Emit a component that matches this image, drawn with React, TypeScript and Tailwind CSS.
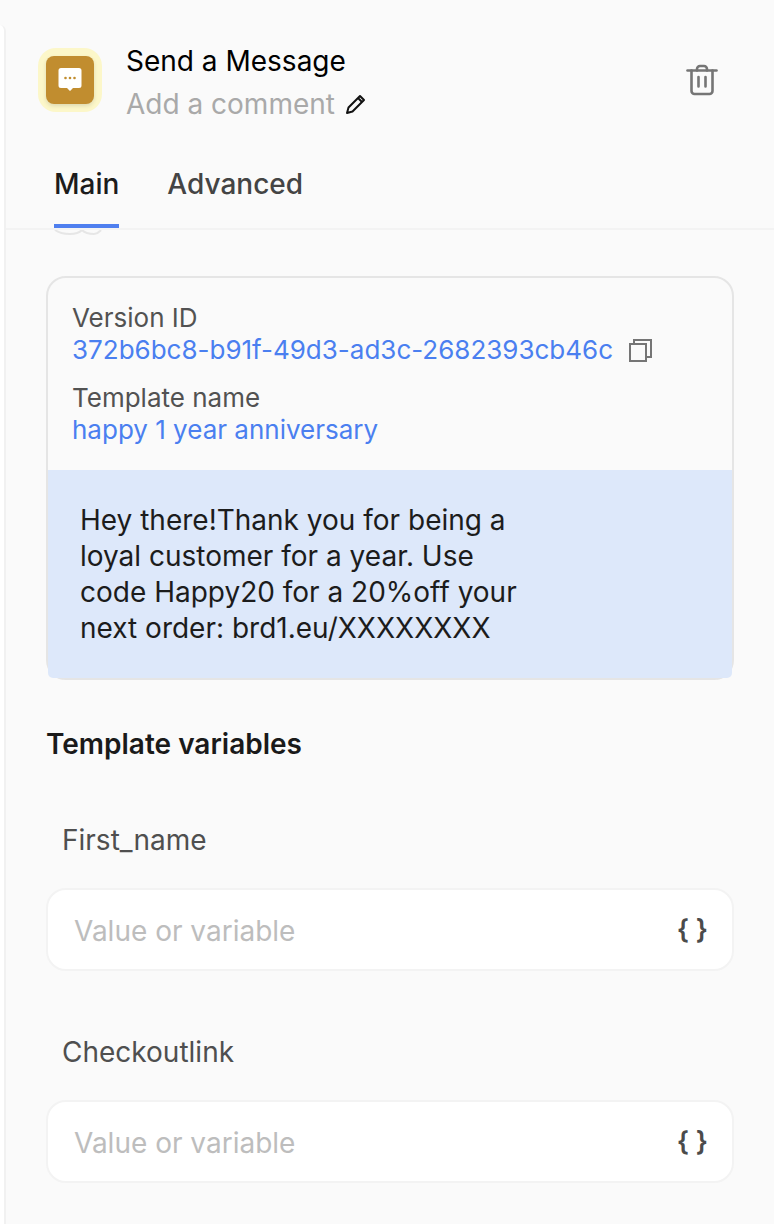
import React from "react";

function VarField({ label }: { label: string }) {
  return (
    <div className="flex flex-col">
      <div className="ml-4 text-[28px] leading-[32px] text-[#4f4f4f]">{label}</div>
      <div className="mt-[32px] flex h-[83px] items-center justify-between rounded-[20px] border-2 border-[#f3f3f3] bg-white pl-[26px] pr-[24px]">
        <span className="mt-[3px] text-[28px] text-[#bdbdbd]">Value or variable</span>
        <span className="-mt-[1px] text-[27px] leading-none font-semibold text-[#4b4b4b]">{"{ }"}</span>
      </div>
    </div>
  );
}

export default function App() {
  return (
    <div className="flex h-[1224px] w-[774px] overflow-hidden bg-[#fafafa] font-['Inter',sans-serif]">
      <div className="mt-[25px] w-[6px] shrink-0 rounded-tr-[14px] border-r-2 border-[#f1f1f1] bg-white" />
      <div className="min-w-0 flex-1">
        <div className="flex items-start pl-[32px] pr-[56px] pt-[48px]">
          <div className="flex h-16 w-16 shrink-0 items-center justify-center rounded-[18px] bg-[#fcf7c9]">
            <div className="flex h-12 w-12 items-center justify-center rounded-[8px] bg-[#c18d2f] shadow-[0_2px_4px_rgba(0,0,0,0.12)]">
              <svg width="24" height="26" viewBox="0 0 24 26">
                <path d="M3 1h18a2.500 2.500 0 0 1 2.500 2.500v15a2.500 2.500 0 0 1-2.500 2.500h-6l-3 3-3-3H3a2.500 2.500 0 0 1-2.500-2.500v-15A2.500 2.500 0 0 1 3 1z" fill="#ffffff" />
                <circle cx="7.500" cy="11" r="1.300" fill="#c18d2f" />
                <circle cx="12" cy="11" r="1.300" fill="#c18d2f" />
                <circle cx="16.500" cy="11" r="1.300" fill="#c18d2f" />
              </svg>
            </div>
          </div>
          <div className="-mt-[9px] ml-[24px] flex-1">
            <div className="text-[28px] leading-[44px] text-black">Send a Message</div>
            <div className="flex items-center text-[28px] leading-[42px] text-[#a9a9a9]">
              Add a comment
              <svg className="ml-[10px]" width="22" height="22" viewBox="0 0 22 22" fill="none" stroke="#111" strokeWidth="2" strokeLinejoin="round">
                <path d="M2 20l1.500-5.500L15 3l4 4L7.500 18.500z" />
                <path d="M13 5l4 4" />
              </svg>
            </div>
          </div>
          <svg className="mt-[16px]" width="32" height="32" viewBox="0 0 32 32" fill="none" stroke="#757575" strokeWidth="2.600" strokeLinecap="round" strokeLinejoin="round">
            <path d="M1.500 6.500h29" />
            <path d="M11 6.500V5a3 3 0 0 1 3-3h4a3 3 0 0 1 3 3v1.500" />
            <path d="M5.500 6.500V27a3 3 0 0 0 3 3h15a3 3 0 0 0 3-3V6.500" />
            <path d="M12.500 13v9.500M19.500 13v9.500" />
          </svg>
        </div>

        <div className="relative mt-[39px] flex h-[66px] border-b-2 border-[#f3f3f3] pl-[48px]">
          <div className="h-[64px] border-b-[4px] border-[#4f7fef] text-[28px] font-medium leading-[40px] text-[#1c1c1c]">Main</div>
          <div className="ml-[48px] text-[28px] font-medium leading-[40px] text-[#444444]">Advanced</div>
          <svg className="absolute left-[48px] top-[66px]" width="48" height="5" viewBox="0 0 48 5" fill="none" stroke="#e6e6e6" strokeWidth="2">
            <path d="M1 0c4 3 10 4 15 4s9-1 12-4c3 3 8 4 12 4s5-2 7-4" />
          </svg>
        </div>

        <div className="pl-[40px] pr-[40px]">
          <div className="mt-[46px] rounded-[20px] border-2 border-[#e5e5e5]">
            <div className="px-6 pb-[24px] pt-[24px] text-[26px] leading-[32px]">
              <div className="text-[#525252]">Version ID</div>
              <div className="flex items-center text-[#4a7ff0]">
                372b6bc8-b91f-49d3-ad3c-2682393cb46c
                <svg className="ml-[16px]" width="23" height="23" viewBox="0 0 23 23" fill="none" stroke="#757575" strokeWidth="2">
                  <rect x="1" y="5" width="16" height="17" />
                  <path d="M5 5V1h17v17h-5" />
                </svg>
              </div>
              <div className="mt-4 text-[#525252]">Template name</div>
              <div className="text-[#4a7ff0]">happy 1 year anniversary</div>
            </div>
            <div className="h-[208px] rounded-b-[5px] bg-[#dde8fa] pl-8 pt-[32px] text-[28px] leading-[36px] text-[#1c1c1c]">
              Hey there!Thank you for being a<br />
              loyal customer for a year. Use<br />
              code Happy20 for a 20%off your<br />
              next order: brd1.eu/XXXXXXXX
            </div>
          </div>

          <div className="mt-[46px] text-[28px] font-semibold leading-[36px] text-[#1a1a1a]">Template variables</div>

          <div className="mt-[62px] flex flex-col gap-[65px]">
            <VarField label="First_name" />
            <VarField label="Checkoutlink" />
          </div>
        </div>
      </div>
    </div>
  );
}
